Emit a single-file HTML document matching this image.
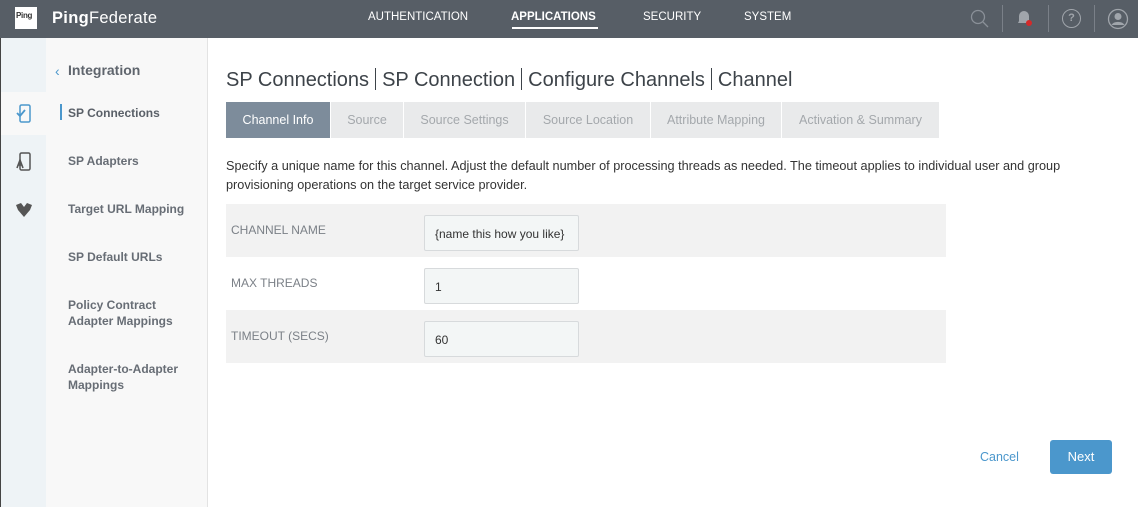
<!DOCTYPE html>
<html><head><style>
*{box-sizing:border-box;margin:0;padding:0}
body{width:1138px;height:507px;overflow:hidden;font-family:"Liberation Sans",Arial,sans-serif;background:#fff;position:relative}
.hdr{position:absolute;left:0;top:0;width:1138px;height:38px;background:#575e66}
.logo{position:absolute;left:15px;top:7px;width:22px;height:22px;background:#fff;font-size:8px;font-weight:bold;color:#333;padding:4px 1px;letter-spacing:-0.3px}
.brand{position:absolute;left:52px;top:9px;color:#fff;font-size:16.5px;letter-spacing:0.3px}
.nav{position:absolute;top:11px;color:#fff;font-size:11.5px}
.rail{position:absolute;left:0;top:38px;width:46px;height:469px;background:#eef3f6;border-left:1px solid #444}
.side{position:absolute;left:46px;top:38px;width:162px;height:469px;background:#f8f8f8;border-right:1px solid #e3e3e3}
.si{position:absolute;left:22px;font-size:12px;font-weight:bold;color:#676d75;line-height:16px}
.t{position:absolute;font-size:12.5px}
.tab{position:absolute;top:102px;height:36px;background:#e9eaeb;color:#a4a8ac;font-size:12.5px;text-align:center;line-height:37px}
.row{position:absolute;left:226px;width:720px;height:53px}
.lbl{position:absolute;left:5px;top:19px;font-size:12px;color:#7b8087}
.inp{position:absolute;left:198px;top:11px;width:155px;height:36px;border:1px solid #d7dadc;border-radius:2px;background:#f3f6f6;font-size:12px;color:#333;padding:11px 10px}
.sep{display:inline-block;width:1px;height:22px;background:#3d4349;vertical-align:-4px;margin:0 6px}
</style></head><body>
<div class="hdr">
<div class="logo">Ping</div>
<div class="brand"><b>Ping</b>Federate</div>
<div class="nav" style="left:368px">AUTHENTICATION</div>
<div class="nav" style="left:511px;font-weight:bold">APPLICATIONS</div>
<div style="position:absolute;left:512px;top:27px;width:86px;height:2px;background:#fff"></div>
<div class="nav" style="left:643px">SECURITY</div>
<div class="nav" style="left:744px">SYSTEM</div>
<svg style="position:absolute;left:968px;top:7px" width="24" height="24"><circle cx="10" cy="10" r="6.5" fill="none" stroke="#8a9098" stroke-width="1.3"/><line x1="15" y1="15" x2="20" y2="20" stroke="#8a9098" stroke-width="1.3"/></svg>
<div style="position:absolute;left:1002px;top:5px;width:1px;height:27px;background:#7a8088"></div>
<svg style="position:absolute;left:1014px;top:8px" width="20" height="22"><path d="M4 15 L5 13 V8 a5 5 0 0 1 10 0 V13 L16 15 Z" fill="#a0a5ab"/><circle cx="15" cy="15" r="3" fill="#d42a2a"/></svg>
<div style="position:absolute;left:1048px;top:5px;width:1px;height:27px;background:#7a8088"></div>
<div style="position:absolute;left:1062px;top:9px;width:19px;height:19px;border:1.3px solid #a0a5ab;border-radius:50%;color:#a0a5ab;font-size:11px;font-weight:bold;text-align:center;line-height:17px">?</div>
<div style="position:absolute;left:1094px;top:5px;width:1px;height:27px;background:#7a8088"></div>
<svg style="position:absolute;left:1107px;top:8px" width="22" height="22"><circle cx="11" cy="11" r="9.5" fill="none" stroke="#a0a5ab" stroke-width="1.3"/><circle cx="11" cy="8.5" r="3.5" fill="#a0a5ab"/><path d="M4.5 17 a7 5 0 0 1 13 0" fill="#a0a5ab"/></svg>
</div>
<div class="rail">
<div style="position:absolute;left:0;top:54px;width:45px;height:43px;background:#f8f8f8"></div>
<svg style="position:absolute;left:14px;top:66px" width="18" height="20"><rect x="5" y="1" width="10" height="17" rx="1.5" fill="none" stroke="#4b97cc" stroke-width="1.5"/><path d="M2 9 L5 12 L10 6" fill="none" stroke="#4b97cc" stroke-width="1.8"/></svg>
<svg style="position:absolute;left:14px;top:114px" width="18" height="20"><rect x="5" y="1" width="10" height="17" rx="1.5" fill="none" stroke="#555" stroke-width="1.5"/><path d="M2 16 L5 8 L8 16 M3 13 H7" fill="none" stroke="#555" stroke-width="1.6"/></svg>
<svg style="position:absolute;left:13px;top:164px" width="20" height="18"><path d="M2 3 L7 1 L10 5 L13 1 L18 3 L16 8 L10 15 L4 8 Z" fill="#555"/></svg>
</div>
<div class="side">
<div style="position:absolute;left:9px;top:25px;color:#4b97cc;font-size:14px">&#8249;</div>
<div style="position:absolute;left:22px;top:24px;font-size:14px;font-weight:bold;color:#5f656d">Integration</div>
<div style="position:absolute;left:14px;top:66px;width:1.5px;height:16px;background:#4b97cc"></div>
<div class="si" style="top:67px;color:#5a6068">SP Connections</div>
<div class="si" style="top:115px">SP Adapters</div>
<div class="si" style="top:163px">Target URL Mapping</div>
<div class="si" style="top:211px">SP Default URLs</div>
<div class="si" style="top:259px">Policy Contract<br>Adapter Mappings</div>
<div class="si" style="top:323px">Adapter-to-Adapter<br>Mappings</div>
</div>
<div class="t" style="left:226px;top:68px;font-size:20px;color:#3d4349;white-space:nowrap">SP Connections<span class="sep"></span>SP Connection<span class="sep"></span>Configure Channels<span class="sep"></span>Channel</div>
<div class="tab" style="left:226px;width:104px;background:#7d8c9b;color:#fff">Channel Info</div>
<div class="tab" style="left:331px;width:72px">Source</div>
<div class="tab" style="left:404px;width:121px">Source Settings</div>
<div class="tab" style="left:526px;width:124px">Source Location</div>
<div class="tab" style="left:651px;width:130px">Attribute Mapping</div>
<div class="tab" style="left:782px;width:157px">Activation &amp; Summary</div>
<div class="t" style="left:226px;top:157px;color:#333;line-height:19px;font-size:12.7px;width:890px">Specify a unique name for this channel. Adjust the default number of processing threads as needed. The timeout applies to individual user and group provisioning operations on the target service provider.</div>
<div class="row" style="top:204px;background:#f2f2f2"><div class="lbl">CHANNEL NAME</div><div class="inp">{name this how you like}</div></div>
<div class="row" style="top:257px"><div class="lbl">MAX THREADS</div><div class="inp">1</div></div>
<div class="row" style="top:310px;background:#f2f2f2"><div class="lbl">TIMEOUT (SECS)</div><div class="inp">60</div></div>
<div class="t" style="left:980px;top:450px;color:#4b97cc;font-size:12.5px">Cancel</div>
<div style="position:absolute;left:1050px;top:440px;width:62px;height:34px;background:#4b97cc;border-radius:3px;color:#fff;font-size:13px;text-align:center;line-height:34px">Next</div>
</body></html>
